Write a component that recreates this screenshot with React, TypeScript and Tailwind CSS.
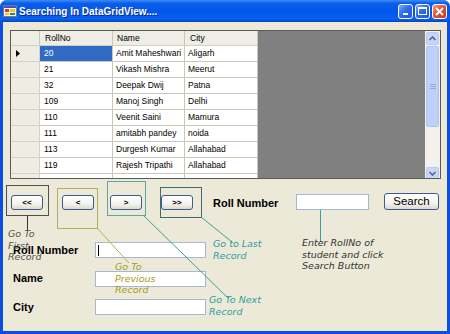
import React from 'react';

const rows = [
  ['20', 'Amit Maheshwari', 'Aligarh'],
  ['21', 'Vikash Mishra', 'Meerut'],
  ['32', 'Deepak Dwij', 'Patna'],
  ['109', 'Manoj Singh', 'Delhi'],
  ['110', 'Veenit Saini', 'Mamura'],
  ['111', 'amitabh pandey', 'noida'],
  ['113', 'Durgesh Kumar', 'Allahabad'],
  ['119', 'Rajesh Tripathi', 'Allahabad'],
  ['', '', ''],
];

const sans = "font-['Liberation_Sans',Arial,sans-serif]";
const note = "font-['DejaVu_Sans',Verdana,sans-serif] italic text-[9.5px] leading-[11.5px] whitespace-pre";

const CaptionButton: React.FC<{ kind: 'min' | 'max' | 'close' }> = ({ kind }) => (
  <div
    className={
      'flex h-[15px] w-[15px] items-center justify-center rounded-[3px] border border-white ' +
      (kind === 'close'
        ? 'bg-[linear-gradient(135deg,#F09A7E_0%,#E2553A_45%,#C8391C_100%)]'
        : 'bg-[linear-gradient(135deg,#7FAAFB_0%,#2E6CF0_45%,#1F57DA_100%)]')
    }
  >
    {kind === 'min' && <div className="mt-[6px] h-[2px] w-[5px] bg-white" />}
    {kind === 'max' && <div className="h-[8px] w-[9px] border border-t-2 border-white" />}
    {kind === 'close' && (
      <svg width="9" height="9" viewBox="0 0 9 9">
        <path d="M1 1 L8 8 M8 1 L1 8" stroke="white" strokeWidth="1.8" />
      </svg>
    )}
  </div>
);

const NavButton: React.FC<{ label: string; className?: string }> = ({ label, className }) => (
  <div
    className={
      'flex h-[15px] w-[32px] shrink-0 items-center justify-center rounded-[3px] border border-[#3C5C8C] bg-[linear-gradient(to_bottom,#FFFFFF_0%,#F4F3EE_60%,#DCDAD0_100%)] text-[8px] font-bold text-black ' +
      (className || '')
    }
  >
    {label}
  </div>
);

const Chevron: React.FC<{ up?: boolean }> = ({ up }) => (
  <svg width="7" height="5" viewBox="0 0 7 5">
    <path d={up ? 'M0.5 4 L3.5 1 L6.5 4' : 'M0.5 1 L3.5 4 L6.5 1'} stroke="#4D6185" strokeWidth="1.5" fill="none" />
  </svg>
);

export default function App() {
  return (
    <div className={'relative flex h-[334px] w-[450px] flex-col overflow-hidden rounded-t-[7px] bg-[#0A4FDF] ' + sans}>
      {/* title bar */}
      <div className="flex h-[22px] shrink-0 items-center bg-[linear-gradient(to_bottom,#3D8DF5_0%,#0A5EEB_15%,#0056E8_55%,#0A62F0_85%,#0045CC_100%)] pl-[3px] pr-[3px]">
        <svg width="14" height="14" viewBox="0 0 14 14" className="shrink-0">
          <rect x="0.5" y="1.5" width="13" height="11" fill="#F4F2EA" stroke="#7A7A7A" />
          <rect x="1" y="2" width="12" height="2" fill="#2A5BD8" />
          <rect x="2" y="5" width="4" height="3" fill="#E03A2A" />
          <rect x="7" y="5" width="5" height="3" fill="#F5C518" />
          <rect x="2" y="9" width="4" height="2" fill="#F5C518" />
          <rect x="7" y="9" width="5" height="2" fill="#3A8A3A" />
        </svg>
        <span className="ml-[2px] text-[10px] font-bold text-white [text-shadow:1px_1px_0_#0A2A8A]">Searching In DataGridView....</span>
        <div className="ml-auto flex gap-[2px]">
          <CaptionButton kind="min" />
          <CaptionButton kind="max" />
          <CaptionButton kind="close" />
        </div>
      </div>

      {/* client area */}
      <div className="mx-[3px] mb-[3px] flex-1 bg-[#ECE9D8]">
        {/* grid */}
        <div className="ml-[7px] mt-[8px] flex h-[149px] w-[431px] overflow-hidden border border-[#5A5A5A] bg-[#808080]">
          <div className="flex w-[247px] shrink-0 flex-col overflow-hidden whitespace-nowrap bg-white text-[8.5px] text-black">
            <div className="flex h-[15px] shrink-0 border-b border-[#D2CFC0] bg-[#EFEEE6]">
              <div className="w-[29px] border-r border-[#CBC7B8]" />
              <div className="flex w-[73px] items-center border-r border-[#CBC7B8] pl-[5px]">RollNo</div>
              <div className="flex w-[72px] items-center border-r border-[#CBC7B8] pl-[4px]">Name</div>
              <div className="flex w-[73px] items-center border-r border-[#CBC7B8] pl-[5px]">City</div>
            </div>
            {rows.map((r, i) => (
              <div key={i} className="flex h-[16px] shrink-0">
                <div className="flex w-[29px] items-center border-b border-r border-[#D5D2C4] bg-[#EFEDE3] pl-[5px]">
                  {i === 0 && (
                    <svg width="4" height="7" viewBox="0 0 4 7">
                      <path d="M0 0 L4 3.5 L0 7 Z" fill="black" />
                    </svg>
                  )}
                </div>
                <div
                  className={
                    'flex w-[73px] items-center overflow-hidden border-b border-r border-[#C9C7BA] pl-[4px] ' +
                    (i === 0 ? 'bg-[#316AC5] text-white' : '')
                  }
                >
                  {r[0]}
                </div>
                <div className="flex w-[72px] items-center overflow-hidden border-b border-r border-[#C9C7BA] pl-[3px]">{r[1]}</div>
                <div className="flex w-[73px] items-center overflow-hidden border-b border-r border-[#C9C7BA] pl-[3px]">{r[2]}</div>
              </div>
            ))}
          </div>
          <div className="flex-1" />
          {/* scrollbar */}
          <div className="flex w-[15px] shrink-0 flex-col bg-[#F3F1EA]">
            <div className="mx-[1px] mt-[1px] flex h-[13px] items-center justify-center rounded-[2px] border border-[#B7C9F5] bg-[#C6D5FC]">
              <Chevron up />
            </div>
            <div className="mx-[1px] mt-[1px] flex h-[81px] flex-col items-center justify-center gap-[1px] rounded-[2px] border border-[#AFC3F4] bg-[#BED0FB]">
              <div className="h-px w-[6px] bg-[#8FA8E8]" />
              <div className="h-px w-[6px] bg-[#8FA8E8]" />
              <div className="h-px w-[6px] bg-[#8FA8E8]" />
            </div>
            <div className="flex-1" />
            <div className="mx-[1px] flex h-[11px] items-center justify-center rounded-t-[2px] border border-b-0 border-[#B7C9F5] bg-[#C6D5FC]">
              <Chevron />
            </div>
          </div>
        </div>

        {/* navigation + search row */}
        <div className="mt-[14px] flex h-[17px] items-start">
          <NavButton label="<<" className="ml-[8px] mt-[2px]" />
          <NavButton label="<" className="ml-[19px] mt-[2px]" />
          <NavButton label=">" className="ml-[16px] mt-[2px]" />
          <NavButton label=">>" className="ml-[19px] mt-[2px]" />
          <div className="ml-[20px] mt-[3px] w-[83px] shrink-0 text-[11px] font-bold leading-[15px] text-black">Roll Number</div>
          <div className="mt-[1px] h-[16px] w-[73px] shrink-0 border border-[#A4B9CF] bg-white" />
          <div className="ml-[15px] flex h-[17px] w-[55px] shrink-0 items-center justify-center rounded-[3px] border border-[#3C5C8C] bg-[linear-gradient(to_bottom,#FFFFFF_0%,#F4F3EE_60%,#DCDAD0_100%)] text-[11.5px] text-black">
            Search
          </div>
        </div>

        {/* detail fields */}
        <div className="mt-[32px] flex flex-col gap-[12.5px] pl-[10px]">
          {['Roll Number', 'Name', 'City'].map((l, i) => (
            <div key={l} className="flex h-[16px] items-center">
              <div className="w-[82px] text-[11px] font-bold text-black">{l}</div>
              <div className="flex h-[16px] w-[111px] items-center border border-[#A4B9CF] bg-white pl-[2px]">
                {i === 0 && <div className="h-[11px] w-px bg-black" />}
              </div>
            </div>
          ))}
        </div>
      </div>

      {/* callouts */}
      <svg className="pointer-events-none absolute left-0 top-0" width="450" height="334">
        <rect x="6.5" y="185.5" width="42" height="30" fill="none" stroke="#505050" />
        <rect x="57.5" y="188.5" width="40" height="40" fill="none" stroke="#B4AE64" />
        <rect x="107.5" y="181.5" width="38" height="34" fill="none" stroke="#5CA8A0" />
        <rect x="160.5" y="187.5" width="41" height="30" fill="none" stroke="#3E6E6E" />
        <line x1="27.5" y1="215.5" x2="27.5" y2="231" stroke="#333333" />
        <line x1="97" y1="228" x2="129" y2="263" stroke="#B4AE50" />
        <line x1="143" y1="215" x2="229" y2="299" stroke="#3AA0A0" />
        <line x1="201" y1="217" x2="232" y2="242" stroke="#3AA0A0" />
        <line x1="320.5" y1="210" x2="320.5" y2="242" stroke="#3AA0A0" />
      </svg>
      <div className={'absolute left-[8px] top-[228px] text-[#555555] ' + note}>{'Go To\nFirst\nRecord'}</div>
      <div className={'absolute left-[115px] top-[261px] text-[#A39C22] ' + note}>{'Go To\nPrevious\nRecord'}</div>
      <div className={'absolute left-[213px] top-[238px] text-[#2E9E9E] ' + note}>{'Go to Last\nRecord'}</div>
      <div className={'absolute left-[209px] top-[294px] text-[#2E9E9E] ' + note}>{'Go To Next\nRecord'}</div>
      <div className={'absolute left-[302px] top-[237px] text-[#333333] ' + note}>{'Enter RollNo of\nstudent and click\nSearch Button'}</div>
    </div>
  );
}
